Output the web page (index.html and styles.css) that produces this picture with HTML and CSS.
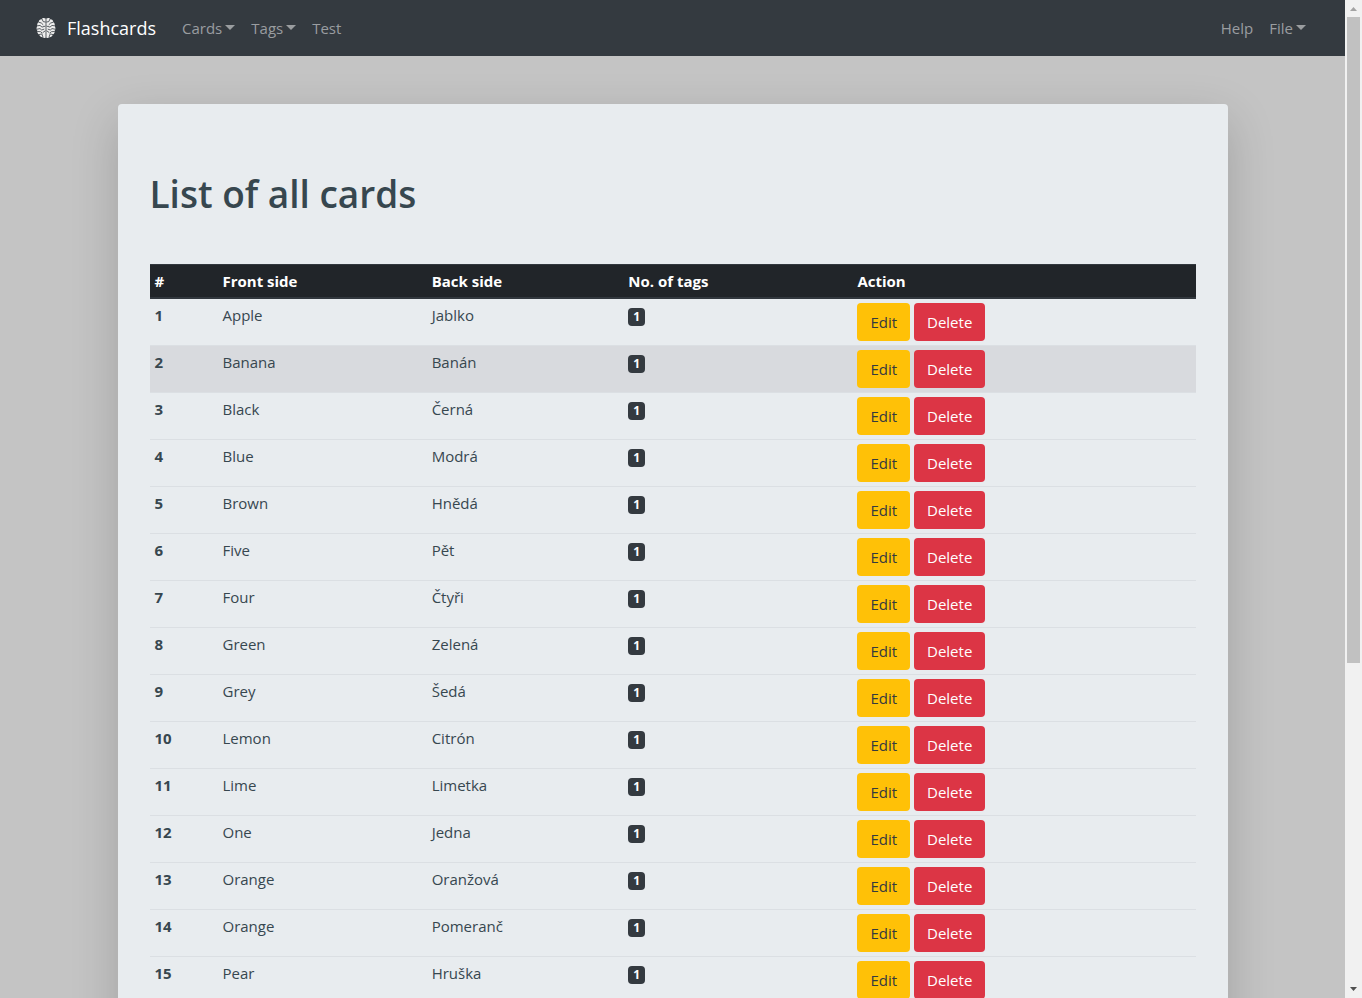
FILE: index.html
```html
<!DOCTYPE html>
<html lang="en">
<head>
<meta charset="utf-8">
<meta name="viewport" content="width=device-width, initial-scale=1">
<title>Flashcards</title>
<link rel="stylesheet" href="styles.css">
</head>
<body>
<div class="viewport">
<div class="page">
<nav class="navbar">
<a class="brand" href="#"><svg class="brand-icon" viewBox="0 0 22 22" aria-hidden="true"><g fill="#eee"><path d="M10.600 1.600C9.200.6 7.400.9 6.600 2.200 4.900 2.200 3.700 3.400 3.700 5 2.400 5.900 1.900 7.500 2.400 8.800 1.300 10.200 1.300 12.300 2.300 13.700c-.2 1.700.5 3.200 1.900 3.800.5 1.900 2.100 3 3.700 2.700.9 1 2.200 1.100 2.700.3z"/><path d="M11.400 1.600c1.400-1 3.200-.7 4 .6 1.700 0 2.900 1.200 2.900 2.800 1.300.9 1.800 2.500 1.300 3.800 1.100 1.400 1.100 3.500.1 4.900.2 1.700-.5 3.200-1.900 3.800-.5 1.900-2.100 3-3.700 2.700-.9 1-2.200 1.100-2.700.3z"/></g><g fill="none" stroke="#343a40" stroke-width=".8" stroke-linecap="round"><path d="M7.200 2.400l1 2.200 2.100.4M3.800 5.200l2.500.8 1.700 1.600M2.600 8.800l2.400-.4 2 1.700 3-.9M2 12.200l3-.6 1.700 1.400 2.200-.8M2.600 14.500l3 .2 1.400 1.200M4.400 17.500l2.400-.6 1 2.700M10 14l-2 1.400"/><path d="M14.800 2.400l-1 2.200-2.100.4M18.200 5.200l-2.500.8L14 7.600M19.400 8.800L17 8.400l-2 1.700-3-.9M20 12.200l-3-.6-1.700 1.400-2.200-.8M19.400 14.500l-3 .2-1.400 1.200M17.600 17.500l-2.400-.6-1 2.700M12 14l2 1.400"/></g></svg>Flashcards</a>
<div class="nav-group nav-main"><button class="nav-item caret" type="button">Cards</button><button class="nav-item caret" type="button">Tags</button><a class="nav-item" href="#">Test</a></div>
<div class="nav-group"><a class="nav-item" href="#">Help</a><button class="nav-item caret" type="button">File</button></div>
</nav>
<main class="content">
<section class="panel">
<h1 class="title">List of all cards</h1>
<table class="cards">
<thead><tr><th class="col-id" scope="col">#</th><th class="col-front" scope="col">Front side</th><th class="col-back" scope="col">Back side</th><th class="col-tags" scope="col">No. of tags</th><th scope="col">Action</th></tr></thead>
<tbody>
<tr><th scope="row">1</th><td>Apple</td><td>Jablko</td><td><span class="badge">1</span></td><td><div class="actions"><button class="btn edit" type="button">Edit</button><button class="btn delete" type="button">Delete</button></div></td></tr>
<tr class="active"><th scope="row">2</th><td>Banana</td><td>Banán</td><td><span class="badge">1</span></td><td><div class="actions"><button class="btn edit" type="button">Edit</button><button class="btn delete" type="button">Delete</button></div></td></tr>
<tr><th scope="row">3</th><td>Black</td><td>Černá</td><td><span class="badge">1</span></td><td><div class="actions"><button class="btn edit" type="button">Edit</button><button class="btn delete" type="button">Delete</button></div></td></tr>
<tr><th scope="row">4</th><td>Blue</td><td>Modrá</td><td><span class="badge">1</span></td><td><div class="actions"><button class="btn edit" type="button">Edit</button><button class="btn delete" type="button">Delete</button></div></td></tr>
<tr><th scope="row">5</th><td>Brown</td><td>Hnědá</td><td><span class="badge">1</span></td><td><div class="actions"><button class="btn edit" type="button">Edit</button><button class="btn delete" type="button">Delete</button></div></td></tr>
<tr><th scope="row">6</th><td>Five</td><td>Pět</td><td><span class="badge">1</span></td><td><div class="actions"><button class="btn edit" type="button">Edit</button><button class="btn delete" type="button">Delete</button></div></td></tr>
<tr><th scope="row">7</th><td>Four</td><td>Čtyři</td><td><span class="badge">1</span></td><td><div class="actions"><button class="btn edit" type="button">Edit</button><button class="btn delete" type="button">Delete</button></div></td></tr>
<tr><th scope="row">8</th><td>Green</td><td>Zelená</td><td><span class="badge">1</span></td><td><div class="actions"><button class="btn edit" type="button">Edit</button><button class="btn delete" type="button">Delete</button></div></td></tr>
<tr><th scope="row">9</th><td>Grey</td><td>Šedá</td><td><span class="badge">1</span></td><td><div class="actions"><button class="btn edit" type="button">Edit</button><button class="btn delete" type="button">Delete</button></div></td></tr>
<tr><th scope="row">10</th><td>Lemon</td><td>Citrón</td><td><span class="badge">1</span></td><td><div class="actions"><button class="btn edit" type="button">Edit</button><button class="btn delete" type="button">Delete</button></div></td></tr>
<tr><th scope="row">11</th><td>Lime</td><td>Limetka</td><td><span class="badge">1</span></td><td><div class="actions"><button class="btn edit" type="button">Edit</button><button class="btn delete" type="button">Delete</button></div></td></tr>
<tr><th scope="row">12</th><td>One</td><td>Jedna</td><td><span class="badge">1</span></td><td><div class="actions"><button class="btn edit" type="button">Edit</button><button class="btn delete" type="button">Delete</button></div></td></tr>
<tr><th scope="row">13</th><td>Orange</td><td>Oranžová</td><td><span class="badge">1</span></td><td><div class="actions"><button class="btn edit" type="button">Edit</button><button class="btn delete" type="button">Delete</button></div></td></tr>
<tr><th scope="row">14</th><td>Orange</td><td>Pomeranč</td><td><span class="badge">1</span></td><td><div class="actions"><button class="btn edit" type="button">Edit</button><button class="btn delete" type="button">Delete</button></div></td></tr>
<tr><th scope="row">15</th><td>Pear</td><td>Hruška</td><td><span class="badge">1</span></td><td><div class="actions"><button class="btn edit" type="button">Edit</button><button class="btn delete" type="button">Delete</button></div></td></tr>
</tbody>
</table>
</section>
</main>
</div>
<div class="scrollbar" aria-hidden="true"><svg class="arrow" viewBox="0 0 17 17"><path d="M5 11h7L8.500 7z" fill="#a3a3a3"/></svg><div class="track"><div class="thumb"></div></div><svg class="arrow" viewBox="0 0 17 17"><path d="M5 6h7l-3.500 4z" fill="#505050"/></svg></div>
</div>
</body>
</html>
```
FILE: styles.css
```css
* { box-sizing: border-box; }

body {
  margin: 0;
  background: #c4c4c4;
  color: #37474f;
  font-family: "Segoe UI", "Open Sans", "Noto Sans", sans-serif;
  font-size: 15px;
  line-height: 24px;
}

button { font: inherit; border: 0; cursor: pointer; }
a { text-decoration: none; }

.viewport { display: flex; height: 100vh; overflow: hidden; }
.page { flex: 1; min-width: 0; overflow: hidden; }

.navbar {
  display: flex;
  align-items: center;
  height: 56px;
  padding: 0 31px 0 35px;
  background: #343a40;
}
.brand {
  display: flex;
  align-items: center;
  gap: 10px;
  margin-right: 18px;
  color: #fff;
  font-size: 18px;
}
.brand-icon { width: 22px; height: 22px; }
.nav-group { display: flex; }
.nav-main { flex: 1; }
.nav-item {
  display: flex;
  align-items: center;
  gap: 3px;
  padding: 8px;
  background: none;
  color: #9a9da0;
}
.caret::after {
  content: "";
  border: 5px solid transparent;
  border-top-color: currentColor;
  border-bottom: 0;
  margin-bottom: 1px;
}

.content { padding: 48px 16px; }
.panel {
  max-width: 1110px;
  margin: 0 auto;
  padding: 66px 32px 48px;
  background: #e8ecef;
  border-radius: 4px;
  box-shadow: 0 16px 48px rgba(0, 0, 0, .18);
}
.title {
  margin: 0 0 46px;
  font-size: 37px;
  line-height: 48px;
  font-weight: 600;
}

.cards {
  width: 100%;
  table-layout: fixed;
  border-spacing: 0;
}
.cards th, .cards td {
  padding: 4px 4px 4px 5px;
  text-align: left;
  vertical-align: top;
}
.cards th { font-weight: 700; }
.cards thead th {
  background: #212529;
  color: #fff;
  border-top: 1px solid #32383e;
  border-bottom: 2px solid #32383e;
}
.cards tbody tr + tr > * { border-top: 1px solid #dbdfe3; }
.cards .active { background: #d8dade; }
.col-id { width: 6.5%; }
.col-front { width: 20%; }
.col-back { width: 18.8%; }
.col-tags { width: 21.9%; }

.badge {
  display: inline-block;
  padding: 3px 5px;
  border-radius: 4px;
  background: #343a40;
  color: #fff;
  font-size: 12px;
  line-height: 12px;
  font-weight: 700;
  vertical-align: middle;
}

.actions { display: flex; gap: 4px; }
.btn {
  height: 38px;
  padding: 0 13px;
  border-radius: 4px;
}
.edit { background: #ffc107; color: #343a40; }
.delete { background: #dc3545; color: #fff; }

.scrollbar {
  display: flex;
  flex-direction: column;
  width: 17px;
  background: #f1f1f1;
}
.arrow { width: 17px; height: 17px; }
.track { flex: 1; padding: 0 2px; }
.thumb { height: 67%; background: #c1c1c1; }
```
